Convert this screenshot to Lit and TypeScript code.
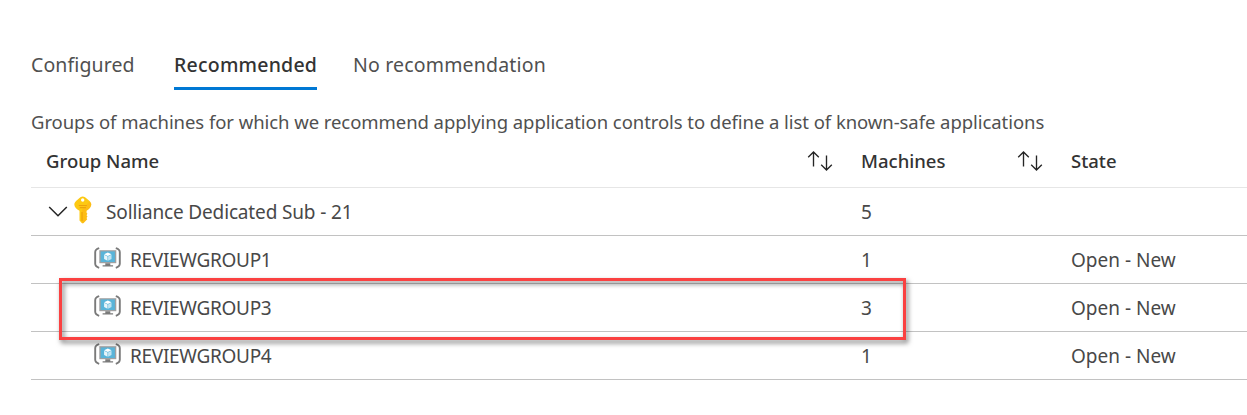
import { LitElement, html, css } from "lit";
import { customElement, property } from "lit/decorators.js";

interface Group { name: string; machines: number; state: string; highlighted?: boolean; }

const sortIcon = html`<svg width="26" height="22" viewBox="0 0 26 22" fill="none" stroke="#252525" stroke-width="1.35">
  <path d="M6.500 16.500V2.200M1.200 7.200 6.500 2 11.800 7.200M19.500 5.500V20M14.200 14.800 19.500 20 24.800 14.800"/></svg>`;

const chevron = html`<svg width="20" height="12" viewBox="0 0 20 12" fill="none" stroke="#252525" stroke-width="1.5">
  <path d="M1.200 1 10 9.800 18.800 1"/></svg>`;

const keyIcon = html`<svg class="key" width="18" height="28" viewBox="0 0 18 28">
  <path fill="#fdc912" d="M8.700.5C10.500.5 11.600 1.600 13.800 3.500 16 5.500 17.300 6.700 17.300 8.500 17.300 10.800 15.200 13.400 12.500 14.800V16.800L13.400 17.800 12.500 19.200 13.400 20.600 12.500 21.900 13.200 23.200 9.600 27Q8.700 27.700 7.800 27L5.500 24.600V14.800C2.500 13.400.300 10.800.300 8.500.300 6.700 1.600 5.500 3.800 3.500 5.900 1.600 7 .5 8.700.5Z"/>
  <path fill="#ff9d1c" opacity=".28" d="M15.700 5.300C16.700 6.300 17.300 7.300 17.300 8.500 17.300 10.800 15.200 13.400 12.500 14.800V16.800L13.400 17.800 12.500 19.200 13.400 20.600 12.500 21.900 13.200 23.200 9.600 27Q8.700 27.700 7.800 27V14Z"/>
  <circle cx="8.700" cy="4" r="1.700" fill="#fff"/>
  <path fill="none" stroke="#eda20c" stroke-width="1.200" d="M4.800 9.500h8M5.700 11.600h6.200M8 16v9"/></svg>`;

const machineIcon = html`<svg width="27" height="22" viewBox="0 0 27 22">
  <path fill="none" stroke="#7a7a7a" stroke-width="1.900" d="M5.200 1.200Q1.200 2.400 1.200 5.200v11.600q0 2.800 4 4M21.800 1.200Q25.800 2.400 25.800 5.200v11.600q0 2.800-4 4"/>
  <path fill="#a0a1a2" d="M5.300 3.200h17v13H5.300Z"/><path fill="#59b4d9" d="M6.700 4.400h14.200v10.600H6.700Z"/>
  <path fill="#7a7a7a" d="M11.300 16.200h5v2h2.800v1.400H8.600v-1.400h2.700Z"/>
  <path fill="#fff" d="m13.800 5.500 3.700 1.700-3.700 1.800-3.700-1.800Z"/>
  <path fill="#e8f5fa" d="m10.100 7.700 3.400 1.700v4.300l-3.400-1.800Z"/><path fill="#c2e4f2" d="m17.500 7.700-3.400 1.700v4.300l3.400-1.800Z"/></svg>`;

@customElement("app-tabs")
class AppTabs extends LitElement {
  static styles = css`
    :host { display: block; }
    .tabs { display: flex; gap: 36px; }
    .tab { height: 42px; line-height: 34px; font-size: 19.5px; color: #505050; white-space: nowrap; box-sizing: border-box; }
    .first { width: 107px; letter-spacing: .11px; }
    .second { width: 143px; }
    .third { letter-spacing: .18px; }
    .active { color: #333; font-weight: 550; letter-spacing: .22px; border-bottom: 3px solid #0078d4; }
  `;
  render() {
    return html`<div class="tabs"><div class="tab first">Configured</div><div class="tab second active">Recommended</div><div class="tab third">No recommendation</div></div>`;
  }
}

@customElement("group-table")
class GroupTable extends LitElement {
  @property({ attribute: false }) groups: Group[] = [];
  static styles = css`
    :host { display: block; }
    .row { display: grid; grid-template-columns: 815px 210px 1fr; height: 48px; box-sizing: border-box; border-bottom: 1px solid #c2c2c2; position: relative; color: #484848; font-size: 19px; }
    .head { height: 52px; border-color: #e6e6e6; color: #333; font-weight: 550; font-size: 18.5px; }
    .cell { display: flex; align-items: center; padding: 0 15px; white-space: nowrap; }
    .head .cell { justify-content: space-between; padding-right: 13px; padding-bottom: 3px; }
    .head svg { margin-top: 2px; }
    .sub { padding-left: 17px; }
    .subname { letter-spacing: -.15px; }
    .name { letter-spacing: -.3px; }
    .key { margin: 0 14px 3px 6px; }
    .child { padding-left: 63px; gap: 9px; }
    .child svg { margin-bottom: 3px; }
    svg { flex: none; display: block; }
    .outline { position: absolute; left: 28px; top: -6px; width: 847px; height: 62px; box-sizing: border-box; border: 3px solid #fa4141; z-index: 1; filter: drop-shadow(2px 3px 2.5px rgba(0,0,0,.55)); }
  `;
  render() {
    return html`
      <div class="row head"><div class="cell"><span>Group Name</span>${sortIcon}</div><div class="cell"><span>Machines</span>${sortIcon}</div><div class="cell"><span>State</span></div></div>
      <div class="row"><div class="cell sub">${chevron}${keyIcon}<span class="subname">Solliance Dedicated Sub - 21</span></div><div class="cell">5</div><div class="cell"></div></div>
      ${this.groups.map(g => html`<div class="row"><div class="cell child">${machineIcon}<span class="name">${g.name}</span></div><div class="cell">${g.machines}</div><div class="cell"><span>${g.state}</span></div>${g.highlighted ? html`<div class="outline"></div>` : null}</div>`)}`;
  }
}

@customElement("app-root")
class AppRoot extends LitElement {
  static styles = css`
    :host { display: block; width: 100%; height: 415px; box-sizing: border-box; padding: 48px 0 0 31px; overflow: hidden; background: #fff; font-family: "Noto Sans", "Open Sans", sans-serif; }
    .intro { height: 46px; line-height: 64px; font-size: 18.5px; letter-spacing: -.062px; color: #505050; white-space: nowrap; }
  `;
  render() {
    return html`<app-tabs></app-tabs><div class="intro">Groups of machines for which we recommend applying application controls to define a list of known-safe applications</div>
      <group-table .groups=${[
        { name: "REVIEWGROUP1", machines: 1, state: "Open - New" },
        { name: "REVIEWGROUP3", machines: 3, state: "Open - New", highlighted: true },
        { name: "REVIEWGROUP4", machines: 1, state: "Open - New" },
      ]}></group-table>`;
  }
}
